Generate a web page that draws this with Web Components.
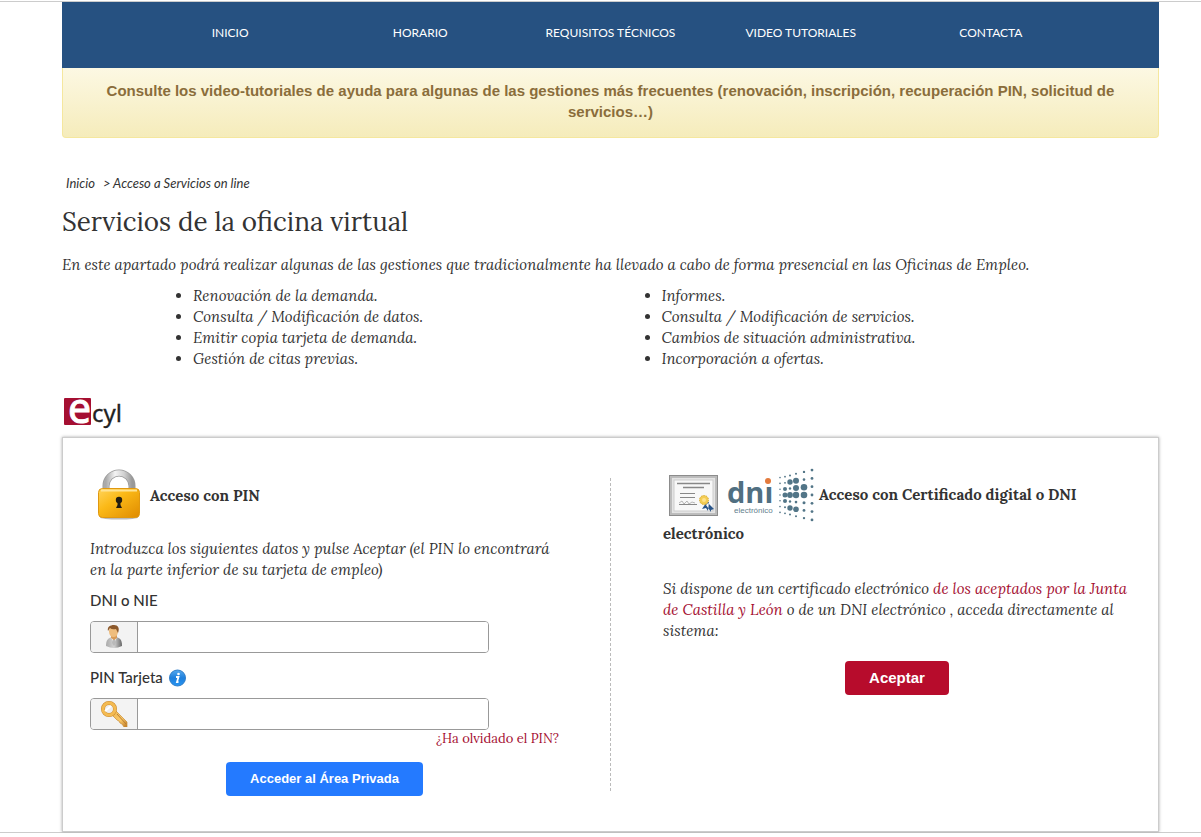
<!DOCTYPE html>
<html lang="es">
<head>
<meta charset="utf-8">
<meta name="viewport" content="width=device-width, initial-scale=1">
<title>ECYL - Servicios de la oficina virtual</title>
<style>
body { margin: 0; background: #fff; color: #333; font: 15px/21px Lora, "Liberation Serif", serif; }
</style>
</head>
<body>
<ecyl-page>
  <site-nav>
    <nav-item href="#inicio">INICIO</nav-item>
    <nav-item href="#horario">HORARIO</nav-item>
    <nav-item href="#requisitos">REQUISITOS TÉCNICOS</nav-item>
    <nav-item href="#tutoriales">VIDEO TUTORIALES</nav-item>
    <nav-item href="#contacta">CONTACTA</nav-item>
  </site-nav>
  <notice-bar>Consulte los video-tutoriales de ayuda para algunas de las gestiones más frecuentes (renovación, inscripción, recuperación PIN, solicitud de servicios…)</notice-bar>
  <bread-crumbs></bread-crumbs>
  <service-intro></service-intro>
  <ecyl-logo></ecyl-logo>
  <access-panel>
    <pin-access slot="pin"></pin-access>
    <certificate-access slot="certificate"></certificate-access>
  </access-panel>
</ecyl-page>

<script>
const define = (name, html, setup) => customElements.define(name, class extends HTMLElement {
  constructor() {
    super();
    const t = document.createElement('template');
    t.innerHTML = html;
    this.attachShadow({ mode: 'open' }).append(t.content.cloneNode(true));
  }
  connectedCallback() { if (setup) setup(this, this.shadowRoot); }
});

define('ecyl-page', `
<style>
:host { display: block; margin-top: 1px; border: solid #ccc; border-width: 1px 0; }
main { margin: 0 42px 0 62px; }
</style>
<main><slot></slot></main>`);

define('site-nav', `
<style>
:host { display: block; background: #265181; }
nav { display: grid; grid-template-columns: repeat(5, 1fr); padding: 20px 73px 25px; }
</style>
<nav aria-label="Principal"><slot></slot></nav>`);

define('nav-item', `
<style>
:host { display: block; text-align: center; }
a { display: block; color: #fff; font: 12px/21px Lato, sans-serif; text-decoration: none; }
</style>
<a><slot></slot></a>`, (el, root) => root.querySelector('a').setAttribute('href', el.getAttribute('href')));

define('notice-bar', `
<style>
:host { display: block; box-sizing: border-box; padding: 12px 40px 13px; text-align: center;
  color: #8a6d3b; background: linear-gradient(#fcf8e3, #f5ecbb); border: 1px solid #f5e79e; border-top: 0;
  border-radius: 0 0 4px 4px; font: bold 15px/21px "Liberation Sans", Arial, sans-serif; }
p { margin: 0 0 2px; }
</style>
<p role="note"><slot></slot></p>`);

define('bread-crumbs', `
<style>
:host { display: block; padding: 35px 4px 0; font: italic 13px/21px Lato, sans-serif; }
nav { display: flex; gap: 8px; }
a { color: inherit; text-decoration: none; }
</style>
<nav aria-label="Ruta"><a href="#inicio">Inicio</a><span>&gt; Acceso a Servicios on line</span></nav>`);

define('service-intro', `
<style>
:host { display: block; }
h1 { margin: 12px 0 16px; font-size: 26px; line-height: 32px; font-weight: normal; }
p { margin: 0 0 10px; font-style: italic; }
.lists { display: grid; grid-template-columns: 1fr 1fr; padding: 0 69px 0 91px; font-style: italic; }
ul { margin: 0; padding-left: 40px; }
</style>
<h1>Servicios de la oficina virtual</h1>
<p>En este apartado podrá realizar algunas de las gestiones que tradicionalmente ha llevado a cabo de forma presencial en las Oficinas de Empleo.</p>
<div class="lists">
  <ul><li>Renovación de la demanda.</li><li>Consulta / Modificación de datos.</li><li>Emitir copia tarjeta de demanda.</li><li>Gestión de citas previas.</li></ul>
  <ul><li>Informes.</li><li>Consulta / Modificación de servicios.</li><li>Cambios de situación administrativa.</li><li>Incorporación a ofertas.</li></ul>
</div>`);

define('ecyl-logo', `
<style>
:host { display: block; padding: 7px 0 0; }
svg { display: block; }
</style>
<svg width="64" height="61" viewBox="0 -22 64 61" role="img" aria-label="ecyl">
  <rect x="2" y="0" width="27" height="27" rx="1" fill="#a50f32"/>
  <text x="6" y="25" fill="#fff" stroke="#fff" font-family="Noto Sans, sans-serif" font-size="41">e</text>
  <text x="30" y="24" fill="#222" stroke="#222" stroke-width=".3" font-family="Noto Sans, sans-serif" font-size="24">cyl</text>
</svg>`);

define('access-panel', `
<style>
:host { display: grid; grid-template-columns: minmax(0, 1fr) 1px minmax(0, 1fr); border: 1px solid #ccc;
  box-shadow: 0 0 3px #aaa; padding: 30px 27px 35px; }
.rule { margin: 10px 0 4px; background: repeating-linear-gradient(#bbb 0 3px, transparent 3px 5px); }
.left { padding-right: 51px; }
.right { padding-left: 52px; }
</style>
<section class="left"><slot name="pin"></slot></section>
<div class="rule"></div>
<section class="right"><slot name="certificate"></slot></section>`);

define('action-button', `
<style>
:host { display: block; text-align: center; }
button { border: 0; border-radius: 4px; padding: 7px 24px; color: #fff; background: var(--button-color);
  font: bold var(--button-size, 13px)/20px "Liberation Sans", Arial, sans-serif; cursor: pointer; }
</style>
<button type="button"><slot></slot></button>`);

define('icon-field', `
<style>
:host { display: block; }
label { display: flex; align-items: center; gap: 6px; margin-bottom: 10px; font: 500 15px/21px Lato, sans-serif; }
.box { display: flex; width: 85%; height: 32px; box-sizing: border-box; border: 1px solid #999; border-radius: 4px; overflow: hidden; }
.icon { width: 46px; flex: none; display: flex; align-items: center; justify-content: center; background: #f3f3f3; border-right: 1px solid #999; }
input { flex: 1; min-width: 0; border: 0; padding: 0 8px; font: 15px "Liberation Sans", sans-serif; background: #fff; }
</style>
<label for="f"><span></span><slot name="hint"></slot></label>
<div class="box"><div class="icon"><slot name="icon"></slot></div><input id="f"></div>`, (el, root) => {
  root.querySelector('label span').textContent = el.getAttribute('label');
  root.querySelector('input').type = el.getAttribute('type') || 'text';
});

define('pin-access', `
<style>
:host { display: block; }
h2 { display: flex; align-items: center; margin: 0 0 16px; font-size: 15px; line-height: 21px; }
h2 svg { flex: none; }
p { margin: 0 0 10px; font-style: italic; }
icon-field { margin-bottom: 14px; }
icon-field + icon-field { margin-bottom: 0; }
.forgot { text-align: right; font-size: 13px; line-height: 18px; margin-bottom: 14px; }
a { color: #a50f32; text-decoration: none; }
action-button { --button-color: #247aff; }
svg { display: block; }
</style>
<h2><svg width="60" height="54" viewBox="0 0 60 54" aria-hidden="true">
  <defs>
    <linearGradient id="gold" x1="0" y1="0" x2="1" y2="1"><stop offset="0" stop-color="#ffd45c"/><stop offset=".4" stop-color="#fbb917"/><stop offset="1" stop-color="#df8b00"/></linearGradient>
    <linearGradient id="steel"><stop offset="0" stop-color="#aaa"/><stop offset=".35" stop-color="#f4f4f4"/><stop offset=".7" stop-color="#d0d0d0"/><stop offset="1" stop-color="#999"/></linearGradient>
  </defs>
  <ellipse cx="29" cy="49.500" rx="19" ry="2" fill="#bbb"/>
  <path d="M16 23v-5a13 13 0 0 1 26 0v5" fill="none" stroke="#999" stroke-width="7"/>
  <path d="M16 23v-5a13 13 0 0 1 26 0v5" fill="none" stroke="url(#steel)" stroke-width="5.500"/>
  <rect x="8.500" y="20.500" width="41" height="29" rx="4" fill="url(#gold)" stroke="#e0980f"/>
  <path d="M11 22.500h36" stroke="#ffe394" stroke-width="2"/>
  <circle cx="29" cy="32" r="3.200" fill="#221c10"/><path d="M27.500 33h3v4l1.500 3h-6l1.500-3z" fill="#221c10"/>
</svg><span>Acceso con PIN</span></h2>
<p>Introduzca los siguientes datos y pulse Aceptar (el PIN lo encontrará en la parte inferior de su tarjeta de empleo)</p>
<icon-field label="DNI o NIE"><svg slot="icon" width="18" height="24" viewBox="0 0 18 24" aria-hidden="true">
  <defs><linearGradient id="coat"><stop offset="0" stop-color="#aaa"/><stop offset=".5" stop-color="#d2d2d2"/><stop offset="1" stop-color="#696969"/></linearGradient></defs>
  <path d="M1 21c0-6 2-8 6-9h4c5 1 6 4 6 9q-8 4-16 0z" fill="url(#coat)"/>
  <path d="M6 12l3 7 3-7z" fill="#fff"/><path d="M8 13h2l1 5-2 3-2-3z" fill="#b9b9b9"/>
  <path d="M6 9h6v4l-3 2-3-2z" fill="#d89a57"/>
  <ellipse cx="8.500" cy="6.500" rx="4.500" ry="5.500" fill="#efbd7d"/>
  <path d="M3 6C2 2 5 0 9 0s6 3 4 8l-2-4q-4 1-6-1z" fill="#8c592c"/>
</svg></icon-field>
<icon-field label="PIN Tarjeta" type="password"><svg slot="hint" width="17" height="18" viewBox="0 0 17 18" role="img" aria-label="Información">
  <defs><linearGradient id="info" x2="0" y2="1"><stop offset="0" stop-color="#54a9ee"/><stop offset=".5" stop-color="#1f7fdc"/><stop offset="1" stop-color="#2695f2"/></linearGradient></defs>
  <circle cx="8.500" cy="9" r="8" fill="url(#info)" stroke="#337fc9"/>
  <circle cx="9.500" cy="5" r="1.300" fill="#fff"/><path d="M7 8h2.500l-1.500 5h1.500" fill="none" stroke="#fff" stroke-width="1.800"/>
</svg><svg slot="icon" width="28" height="26" viewBox="0 0 28 26" aria-hidden="true">
  <defs><linearGradient id="key" x2="1" y2="1"><stop offset="0" stop-color="#edb54d"/><stop offset=".6" stop-color="#fac968"/><stop offset="1" stop-color="#bd7722"/></linearGradient></defs>
  <path d="M11 13l4-4 12 12v5h-3l-2-3-2-1-1-2-2-1z" fill="url(#key)" stroke="#c88d35" stroke-width=".7"/>
  <path d="M17 13l9 10" stroke="#b87e36"/>
  <circle cx="9" cy="8" r="6" fill="#eee" stroke="#cb8b32" stroke-width="4"/><circle cx="9" cy="8" r="6" fill="none" stroke="#f4bb52" stroke-width="3"/>
  <path d="M5 10l6-5" stroke="#fff" stroke-width="2"/>
</svg></icon-field>
<div class="forgot"><a href="#recuperar">¿Ha olvidado el PIN?</a></div>
<action-button>Acceder al Área Privada</action-button>`);

define('certificate-access', `
<style>
:host { display: block; }
h2 { margin: 0 0 34px; font-size: 15px; line-height: 20px; }
svg { vertical-align: middle; }
p { margin: 0 0 20px; font-style: italic; }
a { color: #a50f32; text-decoration: none; }
action-button { --button-color: #b70c2c; --button-size: 15px; }
</style>
<h2><svg width="156" height="56" viewBox="0 0 156 56" role="img" aria-label="Certificado y DNI electrónico">
  <rect x="6.500" y="7.500" width="48" height="40" fill="#bbb" stroke="#8c8c8c"/>
  <rect x="8.500" y="9.500" width="44" height="36" fill="#e4e4e4" stroke="#aaa" stroke-dasharray="1 1"/>
  <rect x="11" y="12" width="39" height="31" fill="#f8f8f8" stroke="#ccc"/>
  <path d="M14 15.500h33M20 19.500h21" stroke="#888" stroke-width="1.500"/>
  <path d="M17 25.500h15M17 29.500h15M16 36.500h18" stroke="#888"/>
  <path d="M16 35l3-2 2 3 3-3 2 3 3-2 3 1" fill="none" stroke="#999" stroke-width=".7"/>
  <path d="M43 35l-4 6 4-1 2 3 1-9zM45 35l6 6-3 1v2l-5-7z" fill="#295488"/>
  <circle cx="41" cy="32" r="4.500" fill="#f3cc53" stroke="#d8a92e" stroke-dasharray="1.500 1"/><circle cx="41" cy="32" r="2" fill="#ffe28b"/>
  <text x="64" y="35" font-family="Open Sans, sans-serif" font-size="29" font-weight="bold" fill="#506f81">dni</text>
  <rect x="99" y="9" width="12" height="9" fill="#fff"/>
  <circle cx="105" cy="13" r="3" fill="#e37a3c"/>
  <text x="71" y="45" font-family="Liberation Sans, sans-serif" font-size="8" font-weight="normal" fill="#657f8e">electrónico</text>
  <g class="dots" fill="#527587"></g>
</svg>Acceso con Certificado digital o DNI electrónico</h2>
<p>Si dispone de un certificado electrónico <a href="#certificados">de los aceptados por la Junta de Castilla y León</a> o de un DNI electrónico , acceda directamente al sistema:</p>
<action-button>Aceptar</action-button>`, (el, root) => {
  // Dot matrix of the DNI emblem: columns fan out to the right, the core dots are larger.
  const columns = [
    [117, 5.800, [0.800, 0.800, 0.800, 0.800, 0.800, 0.800, 0.800]],
    [122, 6.100, [0.900, 0.900, 2, 2.500, 2, 1, 0.900]],
    [127, 6.500, [1, 2.700, 1.200, 2.900, 1.200, 2.700, 1]],
    [133, 7.100, [1, 3, 3, 3.200, 1.300, 2.800, 1]],
    [141, 7.700, [1.200, 1.300, 3.300, 3.300, 1.500, 1.400, 1.200]],
    [149, 8.300, [1.400, 1.400, 1.400, 1.400, 1.400, 1.400, 1.400]]
  ];
  root.querySelector('.dots').innerHTML = columns.map(([x, step, sizes]) =>
    sizes.map((r, i) => `<circle cx="${x}" cy="${27 + (i - 3) * step}" r="${r}"/>`).join('')).join('');
});
</script>
</body>
</html>
